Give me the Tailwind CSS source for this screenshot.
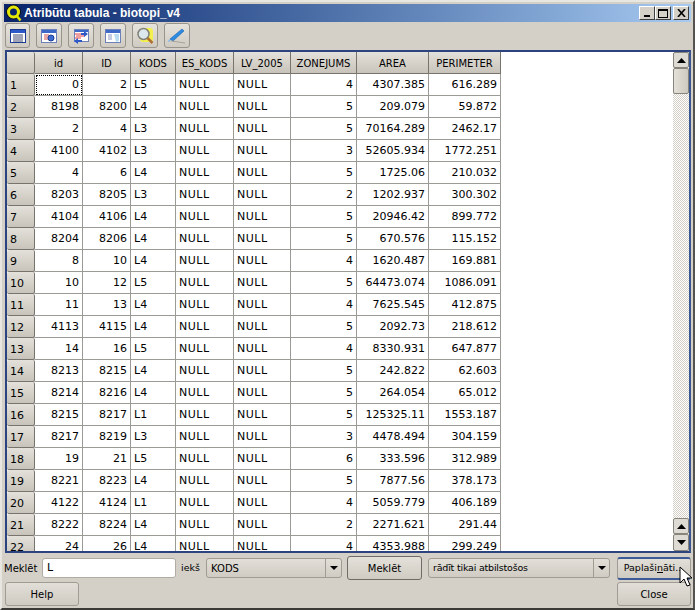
<!DOCTYPE html>
<html lang="lv">
<head>
    <meta charset="UTF-8">
    <title>Atribūtu tabula - biotopi_v4</title>
    <script src="https://cdn.jsdelivr.net/npm/@tailwindcss/browser@4"></script>
    <script>
        const rows = [
            [0,2,"L5",4,"4307.385","616.289"],[8198,8200,"L4",5,"209.079","59.872"],
            [2,4,"L3",5,"70164.289","2462.17"],[4100,4102,"L3",3,"52605.934","1772.251"],
            [4,6,"L4",5,"1725.06","210.032"],[8203,8205,"L3",2,"1202.937","300.302"],
            [4104,4106,"L4",5,"20946.42","899.772"],[8204,8206,"L4",5,"670.576","115.152"],
            [8,10,"L4",4,"1620.487","169.881"],[10,12,"L5",5,"64473.074","1086.091"],
            [11,13,"L4",4,"7625.545","412.875"],[4113,4115,"L4",5,"2092.73","218.612"],
            [14,16,"L5",4,"8330.931","647.877"],[8213,8215,"L4",5,"242.822","62.603"],
            [8214,8216,"L4",5,"264.054","65.012"],[8215,8217,"L1",5,"125325.11","1553.187"],
            [8217,8219,"L3",3,"4478.494","304.159"],[19,21,"L5",6,"333.596","312.989"],
            [8221,8223,"L4",5,"7877.56","378.173"],[4122,4124,"L1",4,"5059.779","406.189"],
            [8222,8224,"L4",2,"2271.621","291.44"],[24,26,"L4",4,"4353.988","299.249"]
        ];
        const num = "h-[22px] px-[3px] pt-[2px] flex items-center justify-end border-r border-b border-[#9c9a94] bg-white";
        const txt = "h-[22px] px-[3px] pt-[2px] flex items-center border-r border-b border-[#9c9a94] bg-white";
        const nul = "h-[22px] px-[3px] pt-[2px] flex items-center tracking-[0.5px] border-r border-b border-[#9c9a94] bg-white";
        document.addEventListener("DOMContentLoaded", function() {
            let html = "";
            rows.forEach((r, i) => {
                html += `<div class="h-[22px] pl-[3px] pt-[3px] flex items-center rounded-[2px] border-r border-b border-[#77746d] bg-gradient-to-b from-[#e4e1da] to-[#c8c4bb]">${i + 1}</div>`;
                if (i == 0) {
                    html += `<div class="${num} outline-1 outline-dotted outline-black -outline-offset-2">${r[0]}</div>`;
                } else {
                    html += `<div class="${num}">${r[0]}</div>`;
                }
                html += `<div class="${num}">${r[1]}</div><div class="${txt}">${r[2]}</div>`;
                html += `<div class="${nul}">NULL</div><div class="${nul}">NULL</div>`;
                html += `<div class="${num}">${r[3]}</div><div class="${num}">${r[4]}</div><div class="${num}">${r[5]}</div>`;
            });
            document.getElementById("rows").innerHTML = html;
        });
    </script>
</head>
<body class="bg-white">
    <div class="relative w-[695px] h-[610px] flex flex-col bg-[#d4d0c8] border-2 border-t-[#e8e6e0] border-l-[#e8e6e0] border-r-[#55534f] border-b-[#3c3a37] p-[2px] pb-0 font-['DejaVu_Sans',sans-serif] text-[11px] text-black overflow-hidden">

        <!-- Title bar -->
        <div class="h-[18px] shrink-0 flex items-center pl-[1px] pr-[2px] bg-gradient-to-r from-[#0a246a] to-[#a6caf0]">
            <svg width="18" height="18" viewBox="0 0 18 18">
                <circle cx="8.5" cy="8" r="7" fill="#0a246a" stroke="#111" stroke-width="1"/>
                <circle cx="8.5" cy="8" r="5" fill="none" stroke="#e4e800" stroke-width="3"/>
                <path d="M11 11l4.5 5.5" stroke="#e4e800" stroke-width="2.5"/>
            </svg>
            <span class="ml-[1px] font-['Liberation_Sans',sans-serif] font-bold text-white text-[12px] leading-none">Atribūtu tabula - biotopi_v4</span>
            <div class="ml-auto flex">
                <div class="w-[16px] h-[14px] flex items-end justify-center pb-[2px] bg-[#d4d0c8] border border-t-white border-l-white border-r-[#404040] border-b-[#404040]">
                    <div class="w-[6px] h-[2px] bg-black"></div>
                </div>
                <div class="w-[16px] h-[14px] flex items-center justify-center bg-[#d4d0c8] border border-t-white border-l-white border-r-[#404040] border-b-[#404040]">
                    <div class="w-[10px] h-[9px] border border-t-2 border-black"></div>
                </div>
                <div class="ml-[2px] w-[16px] h-[14px] flex items-center justify-center bg-[#d4d0c8] border border-t-white border-l-white border-r-[#404040] border-b-[#404040]">
                    <svg width="9" height="8" viewBox="0 0 9 8"><path d="M1 0l7 8M8 0l-7 8" stroke="#000" stroke-width="1.6"/></svg>
                </div>
            </div>
        </div>

        <!-- Toolbar -->
        <div class="h-[28px] shrink-0 flex items-start gap-[6px] pl-[1px] pt-[1px]">
            <div class="w-[25px] h-[25px] flex items-center justify-center rounded-[3px] border border-[#98948c] bg-gradient-to-b from-[#e6e3dd] to-[#cfcbc2]">
                <svg width="18" height="16" viewBox="0 0 18 16">
                    <rect x="1.5" y="1.5" width="15" height="13" fill="#fff" stroke="#1c3c94"/>
                    <rect x="2" y="2" width="14" height="3" fill="#2c58c8"/>
                    <path d="M4 7h10M4 9h10M4 11h10M4 13h10" stroke="#404a70"/>
                </svg>
            </div>
            <div class="w-[26px] h-[25px] flex items-center justify-center rounded-[3px] border border-[#98948c] bg-gradient-to-b from-[#e6e3dd] to-[#cfcbc2]">
                <svg width="18" height="16" viewBox="0 0 18 16">
                    <rect x="1.5" y="1.5" width="15" height="13" fill="#fff" stroke="#6d80b8"/>
                    <rect x="2" y="2" width="14" height="3" fill="#3c68c8"/>
                    <path d="M4 7h5M4 9h4M4 11h4" stroke="#d05050"/>
                    <circle cx="11" cy="10" r="3" fill="#3c6cd0" stroke="#1c3c94"/>
                </svg>
            </div>
            <div class="w-[26px] h-[25px] flex items-center justify-center rounded-[3px] border border-[#98948c] bg-gradient-to-b from-[#e6e3dd] to-[#cfcbc2]">
                <svg width="18" height="16" viewBox="0 0 18 16">
                    <rect x="2.5" y="1.5" width="14" height="12" fill="#fff" stroke="#6d80b8"/>
                    <rect x="3" y="2" width="13" height="2" fill="#3c68c8"/>
                    <path d="M3 6h7M4 8h9M3 10h6" stroke="#e03c3c"/>
                    <path d="M2 13l4-3v2h4v2H6v2zM16 6l-4-3v2H9v2h3v2z" fill="#2c58c8"/>
                </svg>
            </div>
            <div class="w-[26px] h-[25px] flex items-center justify-center rounded-[3px] border border-[#98948c] bg-gradient-to-b from-[#e6e3dd] to-[#cfcbc2]">
                <svg width="18" height="16" viewBox="0 0 18 16">
                    <rect x="1.5" y="1.5" width="15" height="13" fill="#fff" stroke="#6d80b8"/>
                    <rect x="2" y="2" width="14" height="3" fill="#3c68c8"/>
                    <path d="M4 7h4M4 9h4M4 11h4" stroke="#8a96c0"/>
                    <path d="M10 6l5 0 0 7-3 1z" fill="#b8dcf0"/>
                </svg>
            </div>
            <div class="w-[26px] h-[25px] flex items-center justify-center rounded-[3px] border border-[#98948c] bg-gradient-to-b from-[#e6e3dd] to-[#cfcbc2]">
                <svg width="20" height="20" viewBox="0 0 20 20">
                    <rect x="5" y="2" width="13" height="14" rx="3" fill="#f4f050"/>
                    <circle cx="8.5" cy="8" r="5.5" fill="#dce8ee" stroke="#80807a" stroke-width="1.5"/>
                    <path d="M12.5 12l5 5" stroke="#b07030" stroke-width="2.5"/>
                </svg>
            </div>
            <div class="w-[26px] h-[25px] flex items-center justify-center rounded-[3px] border border-[#98948c] bg-gradient-to-b from-[#e6e3dd] to-[#cfcbc2]">
                <svg width="20" height="18" viewBox="0 0 20 18">
                    <path d="M3 12L15 2l2 2L6 14z" fill="#2c8ae0" stroke="#1c64b0" stroke-width=".6"/>
                    <path d="M4 14l14 2" stroke="#a8a49c"/>
                    <path d="M2 12l2 2-3 1z" fill="#88b8e8"/>
                </svg>
            </div>
        </div>

        <!-- Table with scrollbar -->
        <div class="ml-[1px] h-[503px] shrink-0 flex bg-white border-2 border-[#2b4480] border-r-[#3a5690] overflow-hidden">
            <div class="flex-1 overflow-hidden">
                <div class="w-[494px] grid grid-cols-[28px_48px_48px_45px_58px_57px_66px_72px_72px] text-[10px]">
                    <div class="h-[22px] rounded-[2px] border-r border-b border-[#77746d] bg-gradient-to-b from-[#e4e1da] to-[#c8c4bb]"></div>
                    <div class="h-[22px] pt-[2px] flex items-center justify-center border-r border-b border-[#77746d] bg-gradient-to-b from-[#e4e1da] to-[#c8c4bb]">id</div>
                    <div class="h-[22px] pt-[2px] flex items-center justify-center border-r border-b border-[#77746d] bg-gradient-to-b from-[#e4e1da] to-[#c8c4bb]">ID</div>
                    <div class="h-[22px] pt-[2px] flex items-center justify-center border-r border-b border-[#77746d] bg-gradient-to-b from-[#e4e1da] to-[#c8c4bb]">KODS</div>
                    <div class="h-[22px] pt-[2px] flex items-center justify-center border-r border-b border-[#77746d] bg-gradient-to-b from-[#e4e1da] to-[#c8c4bb]">ES_KODS</div>
                    <div class="h-[22px] pt-[2px] flex items-center justify-center border-r border-b border-[#77746d] bg-gradient-to-b from-[#e4e1da] to-[#c8c4bb]">LV_2005</div>
                    <div class="h-[22px] pt-[2px] flex items-center justify-center border-r border-b border-[#77746d] bg-gradient-to-b from-[#e4e1da] to-[#c8c4bb]">ZONEJUMS</div>
                    <div class="h-[22px] pt-[2px] flex items-center justify-center border-r border-b border-[#77746d] bg-gradient-to-b from-[#e4e1da] to-[#c8c4bb]">AREA</div>
                    <div class="h-[22px] pt-[2px] flex items-center justify-center border-r border-b border-[#77746d] bg-gradient-to-b from-[#e4e1da] to-[#c8c4bb]">PERIMETER</div>
                </div>
                <div id="rows" class="w-[494px] grid grid-cols-[28px_48px_48px_45px_58px_57px_66px_72px_72px]"></div>
            </div>
            <!-- Scrollbar -->
            <div class="w-[16px] shrink-0 flex flex-col bg-[repeating-conic-gradient(#d4d0c8_0_25%,#ffffff_0_50%)] bg-[length:2px_2px]">
                <div class="h-[16px] flex items-center justify-center rounded-[2px] border border-[#87847c] bg-[#dedbd4]">
                    <svg width="9" height="5" viewBox="0 0 9 5"><path d="M4.5 0L9 5H0z" fill="#000"/></svg>
                </div>
                <div class="h-[26px] rounded-[2px] border border-[#87847c] bg-gradient-to-r from-[#e4e1da] to-[#cec9c0]"></div>
                <div class="mt-auto h-[16px] flex items-center justify-center rounded-[2px] border border-[#87847c] bg-[#dedbd4]">
                    <svg width="9" height="5" viewBox="0 0 9 5"><path d="M4.5 0L9 5H0z" fill="#000"/></svg>
                </div>
                <div class="h-[17px] flex items-center justify-center rounded-[2px] border border-[#87847c] bg-[#dedbd4]">
                    <svg width="9" height="5" viewBox="0 0 9 5"><path d="M0 0h9L4.5 5z" fill="#000"/></svg>
                </div>
            </div>
        </div>

        <!-- Search row -->
        <div class="h-[26px] mt-[2px] shrink-0 flex items-center text-[10px]">
            <span class="w-[38px]">Meklēt</span>
            <div class="w-[134px] h-[20px] flex items-center pl-[4px] bg-white rounded-[3px] border border-[#b0aca4] text-[11px]">L</div>
            <span class="ml-[5px] w-[25px] text-[9.5px]">iekš</span>
            <div class="w-[136px] h-[20px] flex items-center rounded-[3px] border border-[#a09c94] bg-gradient-to-b from-[#e2dfd8] to-[#d0ccc3]">
                <span class="flex-1 pl-[4px]">KODS</span>
                <div class="w-[16px] h-full flex items-center justify-center border-l border-[#a09c94]">
                    <svg width="8" height="4" viewBox="0 0 8 4"><path d="M0 0h8L4 4z" fill="#000"/></svg>
                </div>
            </div>
            <div class="ml-[5px] w-[75px] h-[24px] flex items-center justify-center rounded-[3px] border border-[#6f6c66] bg-gradient-to-b from-[#e4e1da] to-[#cfcbc2]">Meklēt</div>
            <div class="ml-[6px] w-[182px] h-[20px] flex items-center rounded-[3px] border border-[#a09c94] bg-gradient-to-b from-[#e2dfd8] to-[#d0ccc3]">
                <span class="flex-1 pl-[4px] text-[9.5px] tracking-[-0.2px]">rādīt tikai atbilstošos</span>
                <div class="w-[16px] h-full flex items-center justify-center border-l border-[#a09c94]">
                    <svg width="8" height="4" viewBox="0 0 8 4"><path d="M0 0h8L4 4z" fill="#000"/></svg>
                </div>
            </div>
            <div class="ml-[7px] w-[74px] h-[23px] flex items-center justify-center rounded-[3px] border border-[#a09c94] border-t-2 border-b-2 border-t-[#3c5a98] border-b-[#3c5a98] bg-gradient-to-b from-[#e2dfd8] to-[#cfcbc2]">
                <span class="text-[9.5px]">Paplaši<span class="underline">n</span>āti...</span>
            </div>
        </div>

        <!-- Bottom buttons -->
        <div class="flex justify-between mt-[1px] pl-[1px] text-[10px]">
            <div class="w-[74px] h-[24px] flex items-center justify-center rounded-[3px] border border-[#a09c94] bg-gradient-to-b from-[#e2dfd8] to-[#cfcbc2]">Help</div>
            <div class="w-[74px] h-[24px] flex items-center justify-center rounded-[3px] border border-[#a09c94] bg-gradient-to-b from-[#e2dfd8] to-[#cfcbc2]">Close</div>
        </div>

        <!-- Mouse cursor -->
        <svg class="absolute left-[677px] top-[564px]" width="14" height="22" viewBox="0 0 14 22">
            <path d="M1 1v16l4-4 3 7 3-1-3-7h5z" fill="#fff" stroke="#000"/>
        </svg>
    </div>
</body>
</html>
